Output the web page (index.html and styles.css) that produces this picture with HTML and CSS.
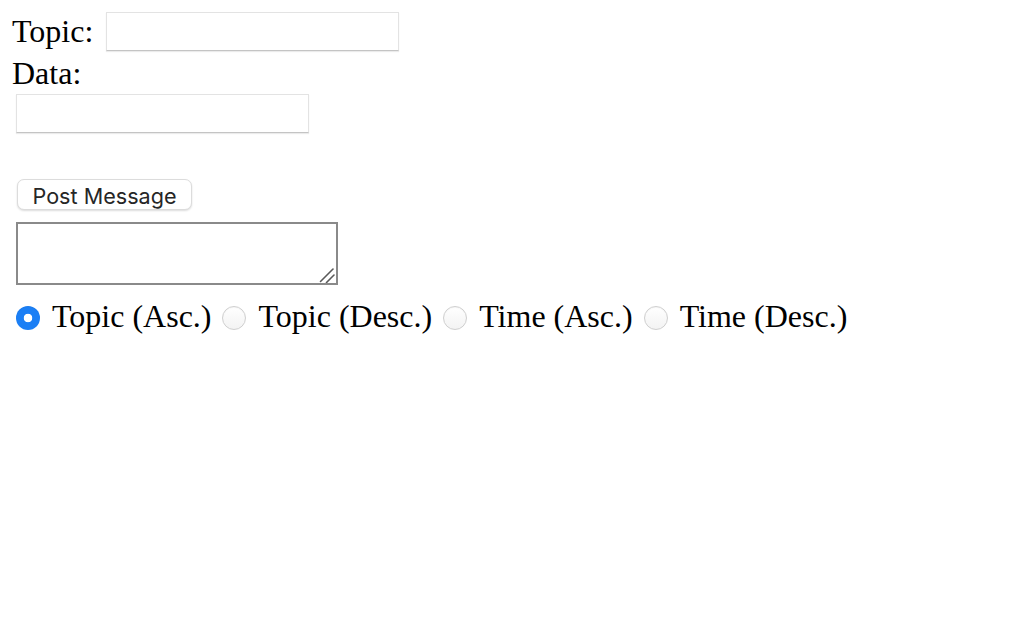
FILE: index.html
```html
<!DOCTYPE html>
<html>
<head>
<meta charset="utf-8">
<link rel="stylesheet" href="styles.css">
</head>
<body>
<div class="page">
  <div class="row-topic">
    <span class="label">Topic:</span>
    <input class="field" type="text">
  </div>
  <div class="label label-data">Data:</div>
  <input class="field field-data" type="text">
  <div class="btn-wrap"><button class="btn">Post Message</button></div>
  <div class="output-wrap">
    <textarea class="output"></textarea>
    <svg class="grip" width="18" height="18" viewBox="0 0 18 18" aria-hidden="true">
      <line x1="3.5" y1="16.5" x2="16" y2="4" stroke="#5a5a5a" stroke-width="1.6" stroke-linecap="round"/>
      <line x1="9.5" y1="17.5" x2="17" y2="10" stroke="#5a5a5a" stroke-width="1.6" stroke-linecap="round"/>
    </svg>
  </div>
  <div class="sort-row">
    <label class="opt"><input class="radio" type="radio" name="sort" checked><span>Topic (Asc.)</span></label>
    <label class="opt"><input class="radio" type="radio" name="sort"><span>Topic (Desc.)</span></label>
    <label class="opt"><input class="radio" type="radio" name="sort"><span>Time (Asc.)</span></label>
    <label class="opt"><input class="radio" type="radio" name="sort"><span>Time (Desc.)</span></label>
  </div>
</div>
</body>
</html>
```

FILE: styles.css
```css
html, body {
  margin: 0;
  padding: 0;
  background: #ffffff;
}

.page {
  padding: 12px 0 0 12px;
  font-family: "Liberation Serif", "Times New Roman", serif;
  font-size: 32px;
  color: #000;
}

.row-topic {
  display: flex;
  align-items: center;
  gap: 13px;
}

.label {
  line-height: 37px;
}

.label-data {
  margin-top: 4px;
}

.field {
  display: block;
  box-sizing: border-box;
  width: 293px;
  height: 39px;
  margin: 0;
  padding: 0 6px;
  border: 1px solid #e3e3e3;
  border-bottom-color: #c4c4c4;
  border-radius: 0;
  box-shadow: 0 1px 1px rgba(0, 0, 0, 0.08);
  background: #fff;
  outline: none;
  font-size: 18px;
}

.field-data {
  margin: 2px 0 0 4px;
}

.btn-wrap {
  margin: 46px 0 0 5px;
}

.btn {
  display: block;
  box-sizing: border-box;
  width: 175px;
  height: 31px;
  margin: 0;
  padding: 2px 0 0;
  border: 1px solid #dcdcdc;
  border-radius: 7px;
  background: #fff;
  box-shadow: 0 1px 2px rgba(0, 0, 0, 0.14);
  font-family: "Inter", "Liberation Sans", sans-serif;
  font-size: 21.6px;
  color: #262626;
}

.output-wrap {
  position: relative;
  width: 322px;
  height: 63px;
  margin: 12px 0 0 4px;
}

.output {
  display: block;
  box-sizing: border-box;
  width: 322px;
  height: 63px;
  margin: 0;
  padding: 4px;
  border: 2px solid #8a8a8a;
  border-radius: 0;
  background: #fff;
  outline: none;
  resize: none;
}

.grip {
  position: absolute;
  right: 3px;
  bottom: 2px;
  display: block;
}

.sort-row {
  display: flex;
  align-items: center;
  margin: 13px 0 0 4px;
}

.opt {
  display: flex;
  align-items: center;
  margin-right: 11px;
  line-height: 37px;
}

.radio {
  appearance: none;
  -webkit-appearance: none;
  box-sizing: border-box;
  width: 24px;
  height: 24px;
  margin: 3px 12px 0 0;
  border: 1px solid #cfcfcf;
  border-radius: 50%;
  background: linear-gradient(#ffffff, #f3f3f3);
  box-shadow: inset 0 1px 1px rgba(0, 0, 0, 0.04);
}

.radio:checked {
  border: none;
  background: radial-gradient(circle, #ffffff 0 4px, #1b7ff5 4.6px);
}
```
